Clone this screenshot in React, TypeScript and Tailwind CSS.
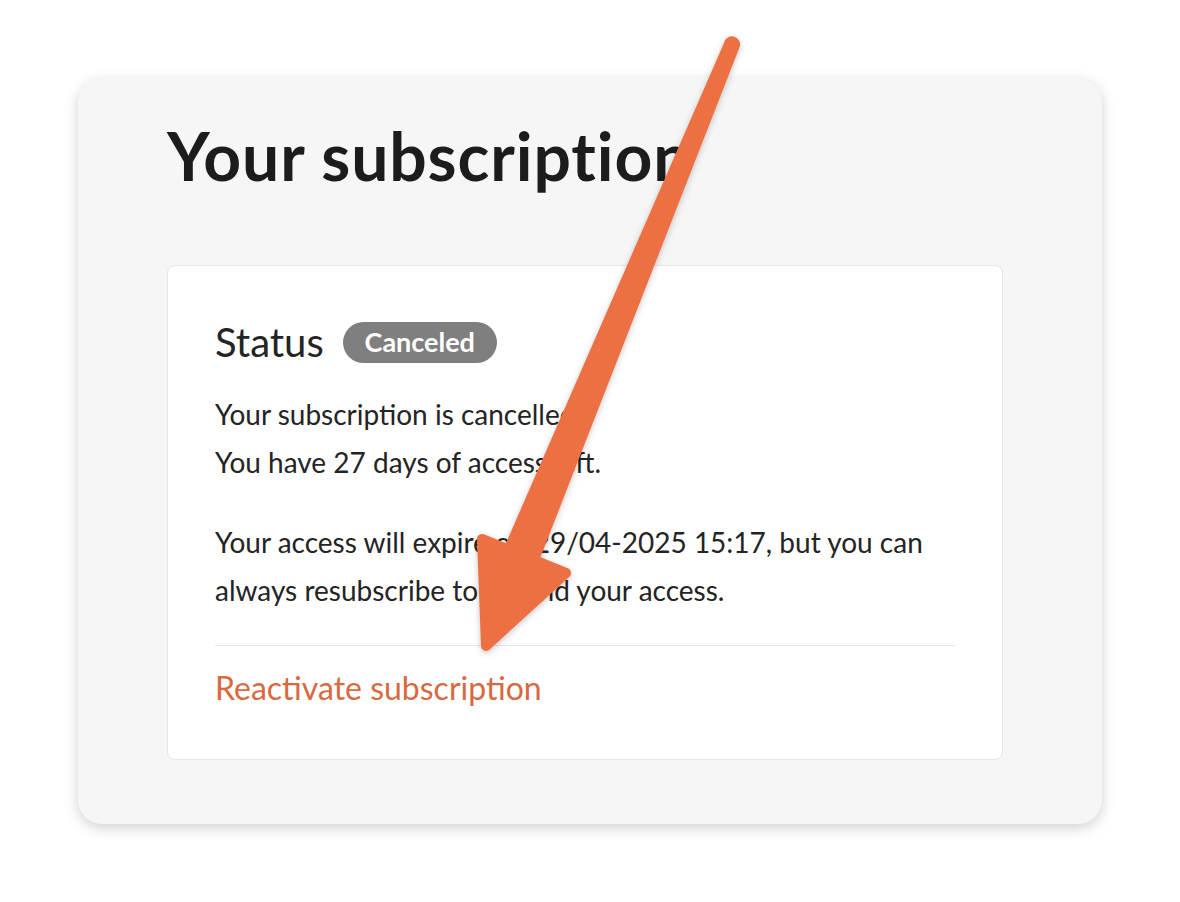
import React from "react";

const ArrowOverlay: React.FC = () => (
  <svg
    className="pointer-events-none absolute left-0 top-0"
    width="1180"
    height="902"
    viewBox="0 0 1180 902"
    style={{ filter: "drop-shadow(0 2px 3px rgba(0,0,0,0.22))" }}
  >
    <path
      d="M724 43 L496 566 L537 566 L740 46 A8 8 0 0 0 724 43 Z"
      fill="#ed7043"
    />
    <polygon
      points="482,539 566,573 486,646"
      fill="#ed7043"
      stroke="#ed7043"
      strokeWidth="10"
      strokeLinejoin="round"
    />
  </svg>
);

export default function App() {
  return (
    <div className="relative min-h-[902px] w-[1180px] bg-white pl-[78px] pt-[78px] font-['Lato',sans-serif]">
      <div className="w-[1024px] rounded-[24px] bg-[#f6f6f6] pb-[64px] pl-[89px] pt-[45px] shadow-[0_4px_14px_rgba(0,0,0,0.18)]">
        <h1 className="text-[66px] font-bold leading-[66px] tracking-[0.9px] text-[#1c1c1c]">
          Your subscription
        </h1>

        <div className="mt-[76px] w-[836px] rounded-[8px] border border-[#e6e6e6] bg-white px-[47px] pb-[47px] pt-[56px] text-[#242424]">
          <div className="flex h-[41px] items-center gap-[19px]">
            <span className="text-[40px] leading-[41px]">Status</span>
            <span className="inline-flex h-[41px] w-[154px] items-center justify-center rounded-full bg-[#7f7f7f] text-[27px] font-bold text-white">
              Canceled
            </span>
          </div>

          <div className="mt-[27px] text-[28px] leading-[48px]">
            <p>Your subscription is cancelled.</p>
            <p>You have 27 days of access left.</p>
          </div>

          <p className="mt-[32px] text-[28px] leading-[48px]">
            Your access will expire on 29/04-2025 15:17, but you can
            <br />
            always resubscribe to extend your access.
          </p>

          <div className="mt-[31px] h-px bg-[#e6e6e6]" />

          <a
            href="#"
            className="mt-[18px] block text-[32px] leading-[48px] text-[#d9693e]"
          >
            Reactivate subscription
          </a>
        </div>
      </div>

      <ArrowOverlay />
    </div>
  );
}
